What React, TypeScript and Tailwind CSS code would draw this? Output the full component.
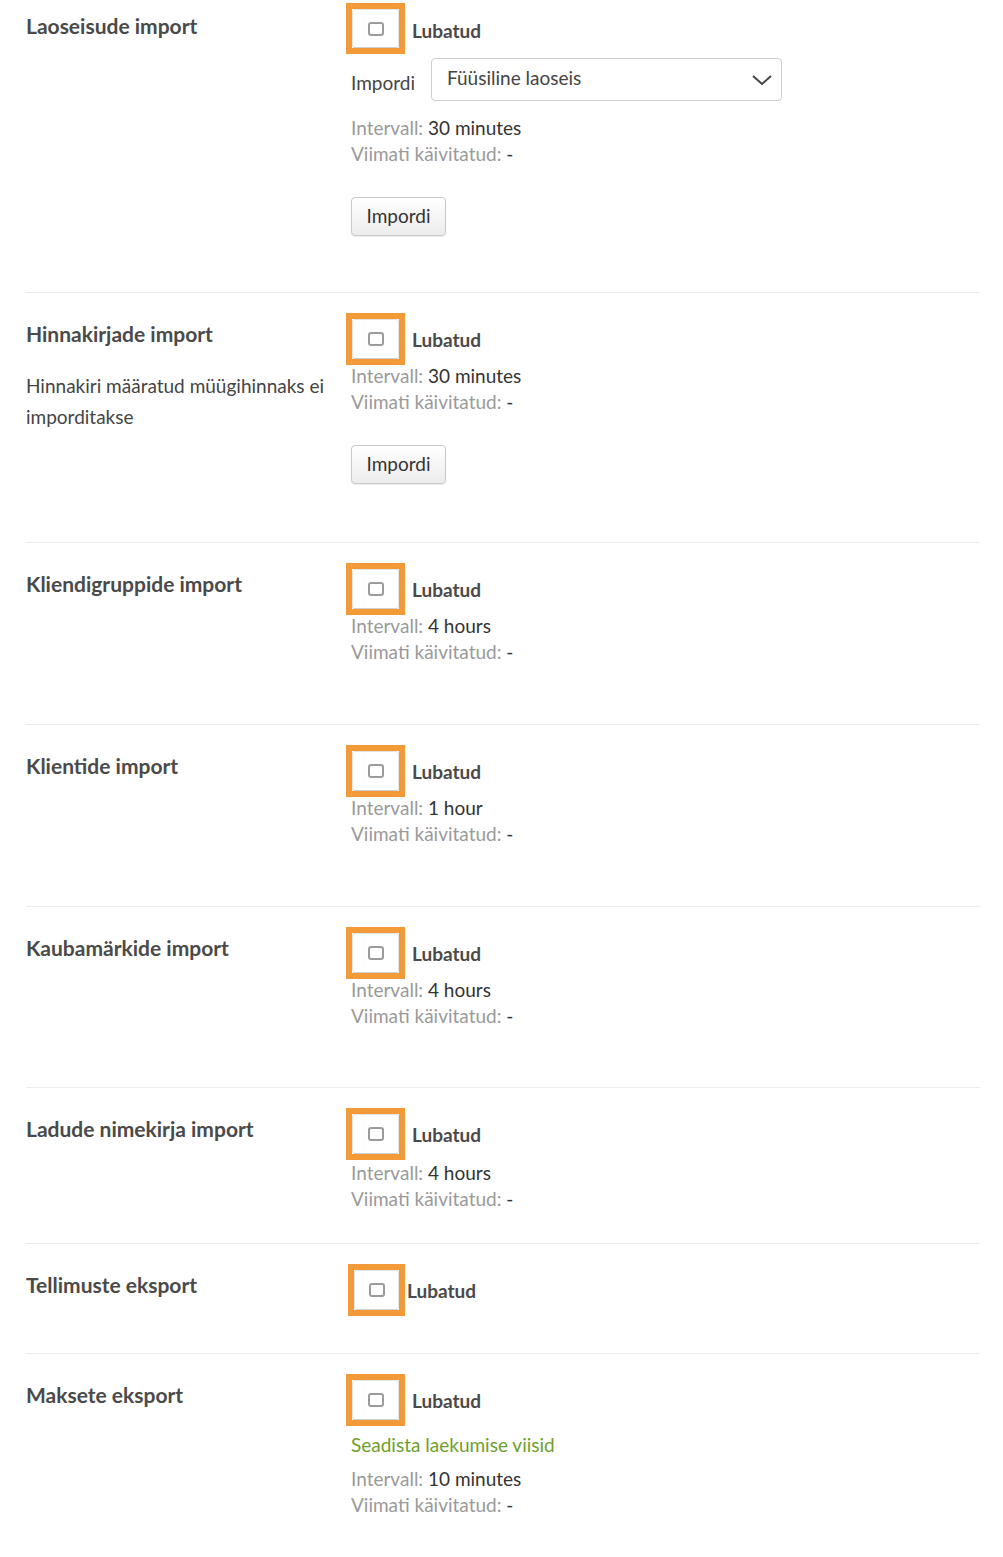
import React from "react";

const FONT = { fontFamily: "Lato, 'Open Sans', sans-serif" };

function Check({ shift = false }: { shift?: boolean }) {
  return (
    <div className="flex items-center h-[52px]">
      <div className={`${shift ? "-ml-[3px] w-[57px]" : "-ml-[5px] w-[59px]"} h-[52px] border-[6px] border-[#f29a38] bg-white`}>
        <div className="w-full h-full rounded-[3px] border border-[#e4e4e4] border-b-[#cfcfcf] flex items-center justify-center">
          <div className="w-[16px] h-[14px] rounded-[3px] border-2 border-[#9b9b9b]" />
        </div>
      </div>
      <span className={`${shift ? "ml-[2px]" : "ml-[7px]"} text-[19px] font-bold text-[#4a4a4a] mt-[2px]`}>Lubatud</span>
    </div>
  );
}

function Info({ value }: { value: string }) {
  return (
    <div className="text-[19px] leading-[26px]">
      <div>
        <span className="text-[#9a9a9a]">Intervall: </span>
        <span className="text-[#333]">{value}</span>
      </div>
      <div>
        <span className="text-[#9a9a9a]">Viimati käivitatud: </span>
        <span className="text-[#333]">-</span>
      </div>
    </div>
  );
}

function ImportButton() {
  return (
    <button className="mt-[30px] h-[39px] w-[95px] rounded-[4px] border border-[#c9c9c9] bg-gradient-to-b from-white to-[#ececec] text-[19px] text-[#333] shadow-[0_1px_1px_rgba(0,0,0,0.08)]">
      Impordi
    </button>
  );
}

function Row({
  title,
  desc,
  children,
  className = "",
}: {
  title: string;
  desc?: React.ReactNode;
  children: React.ReactNode;
  className?: string;
}) {
  return (
    <div className={`flex border-t border-[#ececec] ${className}`}>
      <div className="w-[325px] shrink-0 pt-[7px]">
        <div className="text-[21px] leading-[28px] font-bold text-[#4a4a4a]">{title}</div>
        {desc && <div className="mt-[22px] text-[19px] leading-[31px] text-[#444]">{desc}</div>}
      </div>
      <div className="flex-1 flex flex-col items-start">{children}</div>
    </div>
  );
}

export default function App() {
  return (
    <div className="bg-white min-h-[1557px] w-[1003px] overflow-hidden" style={FONT}>
      <div className="ml-[26px] w-[954px] -mt-[17px]">
        {/* Row 1 */}
        <div className="flex pt-[20px] pb-[56px]">
          <div className="w-[325px] shrink-0 pt-[9px]">
            <div className="text-[21px] leading-[28px] font-bold text-[#4a4a4a]">Laoseisude import</div>
          </div>
          <div className="flex-1 flex flex-col items-start">
            <div className="h-[51px] flex items-center">
              <div className="-ml-[5px] w-[59px] h-[51px] border-[6px] border-[#f29a38] bg-white">
                <div className="w-full h-full rounded-[3px] border border-[#e4e4e4] border-b-[#cfcfcf] flex items-center justify-center">
                  <div className="w-[16px] h-[14px] rounded-[3px] border-2 border-[#9b9b9b]" />
                </div>
              </div>
              <span className="ml-[7px] text-[19px] font-bold text-[#4a4a4a] mt-[6px]">Lubatud</span>
            </div>
            <div className="mt-[4px] flex items-center">
              <span className="text-[19px] text-[#444] mt-[8px]">Impordi</span>
              <div className="ml-[16px] w-[351px] h-[43px] rounded-[4px] border border-[#cfcfcf] bg-white flex items-center justify-between pl-[15px] pr-[8px]">
                <span className="text-[19px] text-[#444] -mt-[2px]">Füüsiline laoseis</span>
                <svg width="22" height="14" viewBox="0 0 22 14" fill="none">
                  <path d="M2 3 L11 11 L20 3" stroke="#444" strokeWidth="2" />
                </svg>
              </div>
            </div>
            <div className="mt-[14px]">
              <Info value="30 minutes" />
            </div>
            <ImportButton />
          </div>
        </div>

        <Row
          title="Hinnakirjade import"
          desc="Hinnakiri määratud müügihinnaks ei imporditakse"
          className="pt-[20px] pb-[58px]"
        >
          <Check />
          <div className="-mt-[2px]">
            <Info value="30 minutes" />
          </div>
          <ImportButton />
        </Row>

        <Row title="Kliendigruppide import" className="pt-[20px] pb-[59px]">
          <Check />
          <div className="-mt-[2px]">
            <Info value="4 hours" />
          </div>
        </Row>

        <Row title="Klientide import" className="pt-[20px] pb-[59px]">
          <Check />
          <div className="-mt-[2px]">
            <Info value="1 hour" />
          </div>
        </Row>

        <Row title="Kaubamärkide import" className="pt-[20px] pb-[58px]">
          <Check />
          <div className="-mt-[2px]">
            <Info value="4 hours" />
          </div>
        </Row>

        <Row title="Ladude nimekirja import" className="pt-[20px] pb-[31px]">
          <Check />
          <div className="mt-[0px]">
            <Info value="4 hours" />
          </div>
        </Row>

        <Row title="Tellimuste eksport" className="pt-[20px] pb-[37px]">
          <Check shift />
        </Row>

        <Row title="Maksete eksport" className="pt-[20px] pb-[40px]">
          <Check />
          <a className="mt-[6px] text-[19px] leading-[26px] text-[#6f9e2c]">Seadista laekumise viisid</a>
          <div className="mt-[8px]">
            <Info value="10 minutes" />
          </div>
        </Row>
      </div>
    </div>
  );
}
